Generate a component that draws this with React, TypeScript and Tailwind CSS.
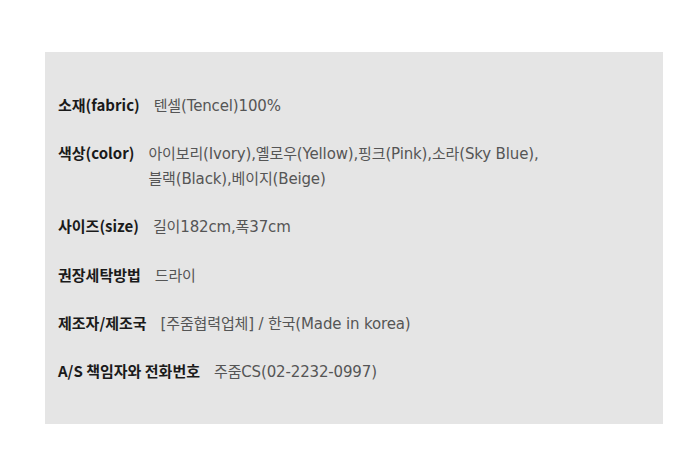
import React from "react";

const rows: { label: string; value: React.ReactNode }[] = [
  { label: "소재(fabric)", value: "텐셀(Tencel)100%" },
  {
    label: "색상(color)",
    value: (
      <>
        아이보리(Ivory),옐로우(Yellow),핑크(Pink),소라(Sky Blue),
        <br />
        블랙(Black),베이지(Beige)
      </>
    ),
  },
  { label: "사이즈(size)", value: "길이182cm,폭37cm" },
  { label: "권장세탁방법", value: "드라이" },
  { label: "제조자/제조국", value: "[주줌협력업체] / 한국(Made in korea)" },
  { label: "A/S 책임자와 전화번호", value: "주줌CS(02-2232-0997)" },
];

export default function App() {
  return (
    <div className="w-[700px] h-[456px] bg-white pt-[52px] pl-[45px]">
      <div className="w-[618px] h-[372px] bg-[#e5e5e5] pt-[40px] pl-[13px] flex flex-col gap-[21.2px]">
        {rows.map((r) => (
          <div key={r.label} className="flex items-baseline gap-[14px] text-[15px] leading-[25px]">
            <div
              className="font-bold text-[#1a1a1a] whitespace-nowrap"
              style={{ fontFamily: '"Noto Sans CJK KR", sans-serif' }}
            >
              {r.label}
            </div>
            <div
              className="text-[#555555] tracking-[-0.15px]"
              style={{ fontFamily: '"DejaVu Sans", "Noto Sans CJK KR", sans-serif' }}
            >
              {r.value}
            </div>
          </div>
        ))}
      </div>
    </div>
  );
}
